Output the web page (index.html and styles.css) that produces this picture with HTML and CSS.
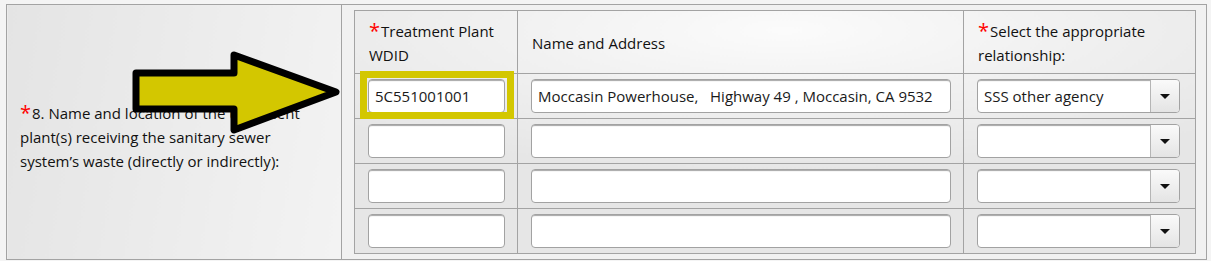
FILE: index.html
```html
<!DOCTYPE html>
<html>
<head>
<meta charset="utf-8">
<link rel="stylesheet" href="styles.css">
</head>
<body>
<div class="page">
  <table class="outer">
    <tr>
      <td class="label-cell">
        <p class="label"><span class="req">*</span>8. Name and location of the treatment plant(s) receiving the sanitary sewer system’s waste (directly or indirectly):</p>
      </td>
      <td class="content-cell">
        <table class="grid">
          <colgroup>
            <col class="c1">
            <col class="c2">
            <col class="c3">
          </colgroup>
          <tr class="head">
            <th><span class="req">*</span>Treatment Plant WDID</th>
            <th>Name and Address</th>
            <th><span class="req">*</span>Select the appropriate relationship:</th>
          </tr>
          <tr>
            <td><div class="hl"><div class="field">5C551001001</div></div></td>
            <td><div class="field">Moccasin Powerhouse,&nbsp;&nbsp; Highway 49 , Moccasin, CA 9532</div></td>
            <td><div class="select"><span class="value">SSS other agency</span><span class="btn"><span class="caret"></span></span></div></td>
          </tr>
          <tr>
            <td><div class="field"></div></td>
            <td><div class="field"></div></td>
            <td><div class="select"><span class="value"></span><span class="btn"><span class="caret"></span></span></div></td>
          </tr>
          <tr>
            <td><div class="field"></div></td>
            <td><div class="field"></div></td>
            <td><div class="select"><span class="value"></span><span class="btn"><span class="caret"></span></span></div></td>
          </tr>
          <tr>
            <td><div class="field"></div></td>
            <td><div class="field"></div></td>
            <td><div class="select"><span class="value"></span><span class="btn"><span class="caret"></span></span></div></td>
          </tr>
        </table>
      </td>
    </tr>
  </table>
  <svg class="arrow" width="220" height="100" viewBox="0 0 220 100">
    <polygon points="4,22 102,22 102,4 204,41 102,79 102,58 4,58" fill="#d3c700" stroke="#000" stroke-width="7" stroke-linejoin="round"/>
  </svg>
</div>
</body>
</html>
```

FILE: styles.css
```css
html, body {
  margin: 0;
  padding: 0;
  background: #f4f4f4;
}
body {
  font-family: "Open Sans", "Noto Sans", sans-serif;
  font-size: 15px;
  color: #111;
}
.page {
  position: relative;
  padding: 4px 0 0 6px;
  width: 1201px;
}
.outer {
  border-collapse: collapse;
  width: 1201px;
  height: 255px;
}
.outer > tbody > tr > td {
  border: 1px solid #a3a3a3;
  padding: 0;
}
.label-cell {
  width: 335px;
  vertical-align: middle;
  background: linear-gradient(100deg, #e4e4e4 0%, #ededed 60%, #f3f3f3 100%);
}
.label {
  margin: 0;
  padding: 10px 30px 0 13px;
  line-height: 24px;
  font-size: 15px;
}
.req {
  color: #f00;
  font-size: 20px;
  line-height: 0;
  vertical-align: -1px;
  margin-right: 1px;
}
.content-cell {
  background: #f1f1f1;
  padding: 5px 10px 5px 12px !important;
  vertical-align: top;
}
.grid {
  border-collapse: collapse;
  table-layout: fixed;
  width: 841px;
  background: radial-gradient(ellipse 600px 140px at 430px 20px, #fbfbfb 0%, #f1f1f1 45%, #e6e6e6 100%);
}
.c1 { width: 163px; }
.c2 { width: 446px; }
.c3 { width: 232px; }
.grid th, .grid td {
  border: 1px solid #a3a3a3;
  padding: 5px 12px 5px 13px;
}
.grid th {
  text-align: left;
  font-weight: normal;
  height: 53px;
  line-height: 24px;
  padding: 5px 8px 4px 14px;
  vertical-align: middle;
}
.grid td {
  height: 34px;
}
.hl {
  position: relative;
}
.hl::after {
  content: "";
  position: absolute;
  left: -8px;
  top: -8px;
  right: -9px;
  bottom: -6px;
  border: 7px solid #d3c700;
}
.field {
  box-sizing: border-box;
  height: 34px;
  background: #fff;
  border: 1px solid #a2a2a2;
  border-radius: 4px;
  box-shadow: inset 0 2px 1px -1px rgba(0,0,0,0.35);
  padding: 0 6px;
  line-height: 32px;
  color: #1a1a1a;
  font-size: 15px;
  white-space: nowrap;
  overflow: hidden;
}
.select {
  box-sizing: border-box;
  height: 34px;
  width: 203px;
  display: flex;
  background: #fff;
  border: 1px solid #a2a2a2;
  border-radius: 4px;
  box-shadow: inset 0 2px 1px -1px rgba(0,0,0,0.35);
  overflow: hidden;
}
.select .value {
  flex: 1;
  padding: 0 6px;
  line-height: 32px;
  color: #1a1a1a;
  white-space: nowrap;
}
.select .btn {
  width: 28px;
  border-left: 1px solid #b5b5b5;
  background: linear-gradient(#fafafa, #e4e4e4);
  display: flex;
  align-items: center;
  justify-content: center;
}
.caret {
  width: 0;
  height: 0;
  border-left: 5px solid transparent;
  border-right: 5px solid transparent;
  border-top: 5px solid #111;
}
.arrow {
  position: absolute;
  left: 132px;
  top: 51px;
  overflow: visible;
}
```
